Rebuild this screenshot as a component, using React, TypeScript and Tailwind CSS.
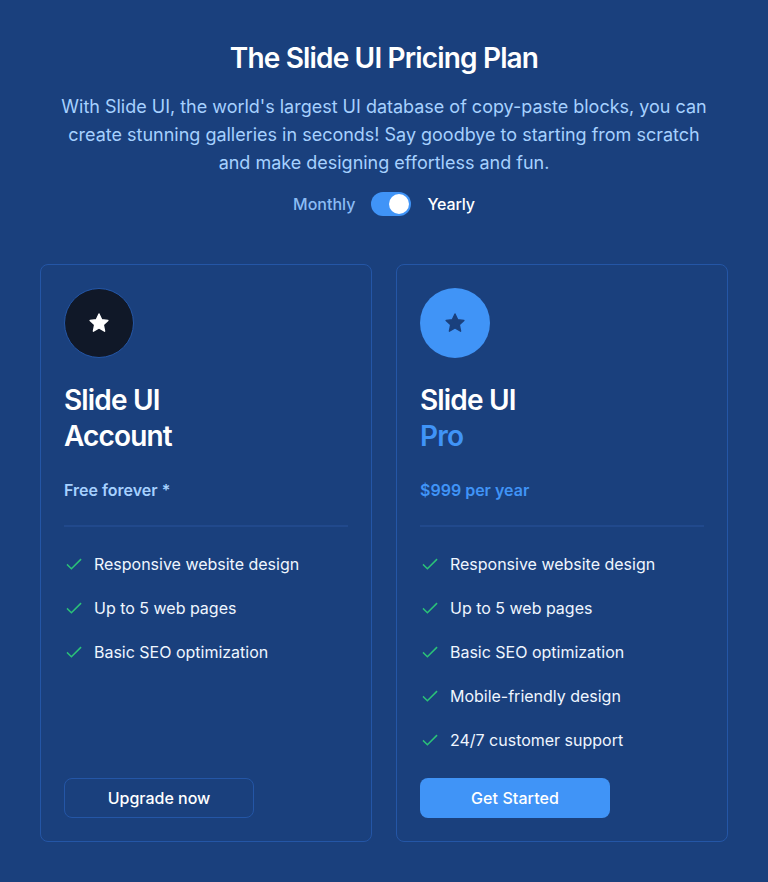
function Star({ color }: { color: string }) {
  return (
    <svg width="24" height="24" viewBox="0 0 24 24" fill="none">
      <path
        d="M12 3l2.7 5.7 6.2.7-4.6 4.3 1.3 6.5L12 17l-5.6 3.2 1.3-6.5-4.6-4.3 6.2-.7z"
        fill={color}
        stroke={color}
        strokeWidth="1.4"
        strokeLinejoin="round"
      />
    </svg>
  );
}

function Feature({ text }: { text: string }) {
  return (
    <li className="flex h-5 items-center gap-2.5">
      <svg width="20" height="20" viewBox="0 0 20 20" fill="none">
        <path d="M3.6 11L7.4 14.7L16.5 5.7" stroke="#2bc178" strokeWidth="1.6" strokeLinecap="square" strokeLinejoin="miter" />
      </svg>
      <span className="text-base leading-5 tracking-[-0.01px] text-[#eff6ff]">{text}</span>
    </li>
  );
}

const features = [
  "Responsive website design",
  "Up to 5 web pages",
  "Basic SEO optimization",
  "Mobile-friendly design",
  "24/7 customer support",
];

export default function App() {
  return (
    <main className="min-h-[882px] bg-[#1a407d] px-10 pt-10 font-['Inter',sans-serif] text-white">
      <header className="flex flex-col items-center text-center">
        <h1 className="text-[28px] leading-9 font-semibold tracking-[-0.84px]">The Slide UI Pricing Plan</h1>
        <p className="mt-[17px] w-[656px] text-lg leading-7 tracking-[-0.01px] text-[#a6d1ff]">
          With Slide UI, the world's largest UI database of copy-paste blocks, you can create stunning galleries in seconds! Say goodbye to starting from scratch and make designing effortless and fun.
        </p>
        <div className="mt-[15px] flex h-6 items-center gap-4 text-base">
          <span className="font-medium text-[#8bbcf5]">Monthly</span>
          <span className="flex h-6 w-10 items-center justify-end rounded-full bg-[#4094f7] px-0.5">
            <span className="size-5 rounded-full bg-white" />
          </span>
          <span className="font-medium tracking-[-0.1px]">Yearly</span>
        </div>
      </header>
      <section className="mt-12 grid h-[578px] grid-cols-2 gap-6">
        <article className="flex flex-col items-start rounded-lg border border-[#2456a6] p-[23px]">
          <div className="flex size-[70px] items-center justify-center rounded-full border border-[#2456a6] bg-[#101828]">
            <Star color="#ffffff" />
          </div>
          <h2 className="mt-6 text-[28px] leading-9 font-semibold tracking-[-0.84px]">Slide UI<br />Account</h2>
          <p className="mt-6 text-base leading-6 font-semibold text-[#a6d1ff]">Free forever *</p>
          <hr className="mt-[23px] h-0.5 w-full border-0 bg-[#21498c]" />
          <ul className="mt-[27px] flex flex-col gap-6">
            {features.slice(0, 3).map((text) => <Feature key={text} text={text} />)}
          </ul>
          <button className="mt-auto h-10 w-[190px] rounded-lg border border-[#2456a6] text-base font-medium">Upgrade now</button>
        </article>
        <article className="flex flex-col items-start rounded-lg border border-[#2456a6] p-[23px]">
          <div className="flex size-[70px] items-center justify-center rounded-full bg-[#4094f7]">
            <Star color="#1a407d" />
          </div>
          <h2 className="mt-6 text-[28px] leading-9 font-semibold tracking-[-0.84px]">Slide UI<br /><span className="text-[#4094f7]">Pro</span></h2>
          <p className="mt-6 text-base leading-6 font-semibold text-[#4094f7]">$999 per year</p>
          <hr className="mt-[23px] h-0.5 w-full border-0 bg-[#21498c]" />
          <ul className="mt-[27px] flex flex-col gap-6">
            {features.map((text) => <Feature key={text} text={text} />)}
          </ul>
          <button className="mt-auto h-10 w-[190px] rounded-lg bg-[#4094f7] text-base font-medium tracking-[0.08px]">Get Started</button>
        </article>
      </section>
    </main>
  );
}
